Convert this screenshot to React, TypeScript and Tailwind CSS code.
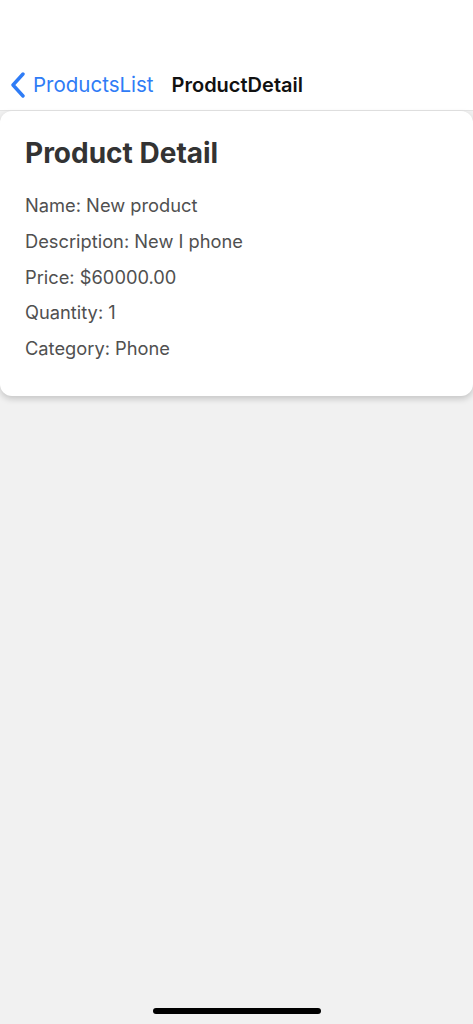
import React from "react";

export default function App() {
  const rows = [
    "Name: New product",
    "Description: New I phone",
    "Price: $60000.00",
    "Quantity: 1",
    "Category: Phone",
  ];
  return (
    <div
      className="relative w-[473px] h-[1024px] bg-[#f1f1f1] flex flex-col overflow-hidden"
      style={{ fontFamily: "Inter, 'Noto Sans', sans-serif" }}
    >
      <div className="h-[111px] bg-white border-b border-[#e4e4e4] flex items-end pb-[11px]">
        <div className="flex items-center h-[28px]">
          <svg width="18" height="26" viewBox="0 0 18 26" className="ml-[9px] mr-[6px]">
            <path d="M14 2 L4 13 L14 24" fill="none" stroke="#2f7cf6" strokeWidth="3.4" strokeLinecap="round" strokeLinejoin="round" />
          </svg>
          <span className="text-[20.5px] text-[#2f7cf6] tracking-[0px]">ProductsList</span>
          <span className="ml-[18px] text-[20px] font-semibold text-[#111]">ProductDetail</span>
        </div>
      </div>
      <div className="bg-white rounded-[12px] shadow-[0_3px_6px_rgba(0,0,0,0.18)] px-[25px] pt-[25px] pb-[29px]">
        <div className="text-[28px] font-bold text-[#333] leading-[34px] mb-[18px]">Product Detail</div>
        <div className="flex flex-col">
          {rows.map((r) => (
            <div key={r} className="text-[18.3px] text-[#505050] leading-[35.8px]">
              {r}
            </div>
          ))}
        </div>
      </div>
      <div className="absolute left-[153px] top-[1008px] w-[168px] h-[6px] rounded-full bg-black" />
    </div>
  );
}
